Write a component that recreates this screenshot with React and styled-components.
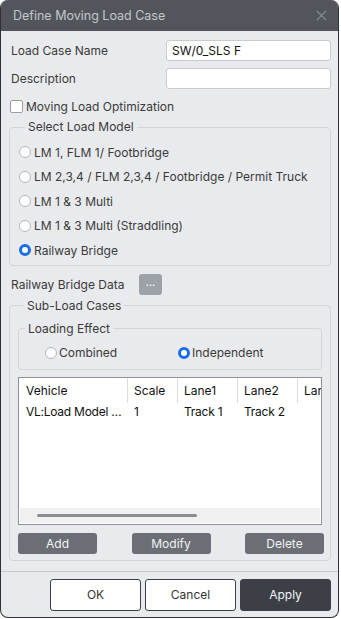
import React from 'react'
import styled, { createGlobalStyle } from "styled-components";

const GlobalStyle = createGlobalStyle`
  html, body {
    margin: 0;
    padding: 0;
    background: #ffffff;
  }
  body {
    font-family: Inter, "Noto Sans", "Liberation Sans", sans-serif;
    font-size: 12px;
    color: #3a3a3a;
  }
`;

const loadModels = [
  "LM 1, FLM 1/ Footbridge",
  "LM 2,3,4 / FLM 2,3,4 / Footbridge / Permit Truck",
  "LM 1 & 3 Multi",
  "LM 1 & 3 Multi (Straddling)",
  "Railway Bridge",
];

const columns = ["Vehicle", "Scale", "Lane1", "Lane2", "Lane3"];
const rows = [["VL:Load Model SW/0", "1", "Track 1", "Track 2", ""]];

function App() {
  return (
    <>
      <GlobalStyle />
      <Dialog>
        <Header>
          <Title>Define Moving Load Case</Title>
          <CloseIcon viewBox="0 0 12 12">
            <path d="M1 1L11 11M11 1L1 11" stroke="#8d9197" strokeWidth="1.2" />
          </CloseIcon>
        </Header>
        <Body>
          <FieldRow>
            <Label>Load Case Name</Label>
            <TextInput defaultValue="SW/0_SLS F" />
          </FieldRow>
          <FieldRow gap={7}>
            <Label>Description</Label>
            <TextInput defaultValue="" />
          </FieldRow>
          <CheckRow>
            <CheckBox />
            <span>Moving Load Optimization</span>
          </CheckRow>

          <Group top={4} pad="5px 0 2px 9px">
            <Legend indent={6}>Select Load Model</Legend>
            {loadModels.map((m, i) => (
              <RadioRow key={m}>
                <Radio checked={i === 4} />
                <span>{m}</span>
              </RadioRow>
            ))}
          </Group>

          <DataRow>
            <Label width={128}>Railway Bridge Data</Label>
            <DotsButton>...</DotsButton>
          </DataRow>

          <Group top={3} pad="0 8px 6px 8px">
            <Legend indent={6}>Sub-Load Cases</Legend>
            <Group top={7} pad="5px 0 5px 0">
              <Legend indent={6}>Loading Effect</Legend>
              <EffectRow>
                <EffectOption>
                  <Radio />
                  <span>Combined</span>
                </EffectOption>
                <EffectOption>
                  <Radio checked />
                  <span>Independent</span>
                </EffectOption>
              </EffectRow>
            </Group>

            <Table>
              <TableScroll>
                <HeadRow>
                  {columns.map((c) => (
                    <HeadCell key={c}>{c}</HeadCell>
                  ))}
                </HeadRow>
                {rows.map((r, i) => (
                  <DataLine key={i}>
                    {r.map((v, j) => (
                      <Cell key={j}>{v}</Cell>
                    ))}
                  </DataLine>
                ))}
              </TableScroll>
              <HScroll>
                <Thumb />
              </HScroll>
            </Table>

            <ActionRow>
              <ActionButton>Add</ActionButton>
              <ActionButton>Modify</ActionButton>
              <ActionButton>Delete</ActionButton>
            </ActionRow>
          </Group>
        </Body>
        <Footer>
          <FooterButton>OK</FooterButton>
          <FooterButton>Cancel</FooterButton>
          <FooterButton primary>Apply</FooterButton>
        </Footer>
      </Dialog>
    </>
  );
}

export default App;

const Dialog = styled.div`
  width: 339px;
  height: 618px;
  box-sizing: border-box;
  border: 1px solid #2e3136;
  border-top: none;
  border-radius: 8px;
  overflow: hidden;
  background: #e9eaed;
  display: flex;
  flex-direction: column;
`;

const Header = styled.div`
  height: 31px;
  flex-shrink: 0;
  background: #52565c;
  display: flex;
  align-items: center;
  justify-content: space-between;
  padding: 0 11px 0 12px;
`;

const Title = styled.div`
  color: #c4c6c9;
  font-size: 12.5px;
`;

const CloseIcon = styled.svg`
  width: 11px;
  height: 11px;
`;

const Body = styled.div`
  padding: 9px 7px 0 8px;
  display: flex;
  flex-direction: column;
`;

const FieldRow = styled.div`
  display: flex;
  align-items: center;
  justify-content: space-between;
  height: 21px;
  margin-top: ${(p) => (p.gap ? `${p.gap}px` : "0")};
  padding-left: 2px;
`;

const Label = styled.span`
  font-size: 12px;
  color: #3a3a3a;
  width: ${(p) => (p.width ? `${p.width}px` : "auto")};
`;

const TextInput = styled.input`
  width: 165px;
  height: 21px;
  box-sizing: border-box;
  border: 1px solid #c9cbcf;
  border-radius: 3px;
  background: #fff;
  font-family: inherit;
  font-size: 12px;
  color: #111;
  padding: 0 5px;
  outline: none;
`;

const CheckRow = styled.div`
  display: flex;
  align-items: center;
  gap: 3px;
  height: 18px;
  margin-top: 8px;
  padding-left: 1px;
  font-size: 12px;
`;

const CheckBox = styled.span`
  width: 11px;
  height: 11px;
  border: 1px solid #9a9da2;
  border-radius: 2px;
  background: #fff;
`;

const Group = styled.fieldset`
  margin: ${(p) => p.top}px 0 0 0;
  padding: ${(p) => p.pad};
  border: 1px solid #d3d5d9;
  border-radius: 4px;
  min-width: 0;
  display: flex;
  flex-direction: column;
`;

const Legend = styled.legend`
  margin-left: ${(p) => p.indent}px;
  padding: 0 3px;
  font-size: 12px;
  line-height: 16px;
  color: #3a3a3a;
`;

const RadioRow = styled.div`
  display: flex;
  align-items: center;
  gap: 3px;
  height: 24.5px;
  font-size: 12px;
  color: #3a3a3a;
`;

const Radio = styled.span`
  width: 12px;
  height: 12px;
  box-sizing: border-box;
  border-radius: 50%;
  background: #fff;
  border: ${(p) => (p.checked ? "3.5px solid #1a6ee6" : "1px solid #b4b7bb")};
  flex-shrink: 0;
`;

const DataRow = styled.div`
  display: flex;
  align-items: center;
  margin-top: 8px;
  height: 21px;
  padding-left: 2px;
`;

const DotsButton = styled.div`
  width: 23px;
  height: 21px;
  border-radius: 3px;
  background: #9da2a8;
  color: #fff;
  font-size: 11px;
  display: flex;
  align-items: center;
  justify-content: center;
  line-height: 1;
  padding-bottom: 3px;
  box-sizing: border-box;
`;

const EffectRow = styled.div`
  display: grid;
  grid-template-columns: 133px 1fr;
  padding-left: 26px;
  height: 22px;
  align-items: center;
`;

const EffectOption = styled.div`
  display: flex;
  align-items: center;
  gap: 2px;
  font-size: 12px;
  color: #3a3a3a;
`;

const Table = styled.div`
  margin-top: 7px;
  height: 148px;
  box-sizing: border-box;
  border: 1px solid #8e9196;
  background: #fff;
  display: flex;
  flex-direction: column;
  overflow: hidden;
`;

const TableScroll = styled.div`
  flex: 1;
  overflow: hidden;
  padding-left: 1px;
`;

const gridCols = "108px 50px 60px 60px 60px";

const HeadRow = styled.div`
  display: grid;
  grid-template-columns: ${gridCols};
  height: 25px;
  align-items: stretch;
`;

const HeadCell = styled.div`
  display: flex;
  align-items: center;
  padding-left: 6px;
  font-size: 12px;
  color: #111;
  border-right: 1px solid #dcdde0;
  white-space: nowrap;
  overflow: hidden;
`;

const DataLine = styled.div`
  display: grid;
  grid-template-columns: ${gridCols};
  height: 18px;
  align-items: center;
`;

const Cell = styled.div`
  padding: 0 1px 0 6px;
  font-size: 12px;
  letter-spacing: -0.25px;
  color: #111;
  white-space: nowrap;
  overflow: hidden;
  text-overflow: ellipsis;
`;

const HScroll = styled.div`
  height: 15px;
  margin: 0 1px 1px 1px;
  background: #f0f0f0;
  display: flex;
  align-items: center;
  padding-left: 17px;
`;

const Thumb = styled.div`
  width: 160px;
  height: 3px;
  border-radius: 2px;
  background: #8a8c90;
`;

const ActionRow = styled.div`
  display: flex;
  justify-content: space-between;
  margin: 8px -2px 0 0;
`;

const ActionButton = styled.div`
  width: 79px;
  height: 21px;
  border-radius: 3px;
  background: #6b6f75;
  color: #f2f3f4;
  font-size: 12px;
  display: flex;
  align-items: center;
  justify-content: center;
`;

const Footer = styled.div`
  margin-top: 10px;
  border-top: 1px solid #c6c8cc;
  display: flex;
  justify-content: flex-end;
  gap: 4px;
  padding: 7px 7px 0 0;
`;

const FooterButton = styled.div`
  width: 91px;
  height: 32px;
  box-sizing: border-box;
  border-radius: 3px;
  border: 1px solid #3c4046;
  background: ${(p) => (p.primary ? "#3c4046" : "#ffffff")};
  color: ${(p) => (p.primary ? "#f4f5f6" : "#333")};
  font-size: 12px;
  display: flex;
  align-items: center;
  justify-content: center;
`;
